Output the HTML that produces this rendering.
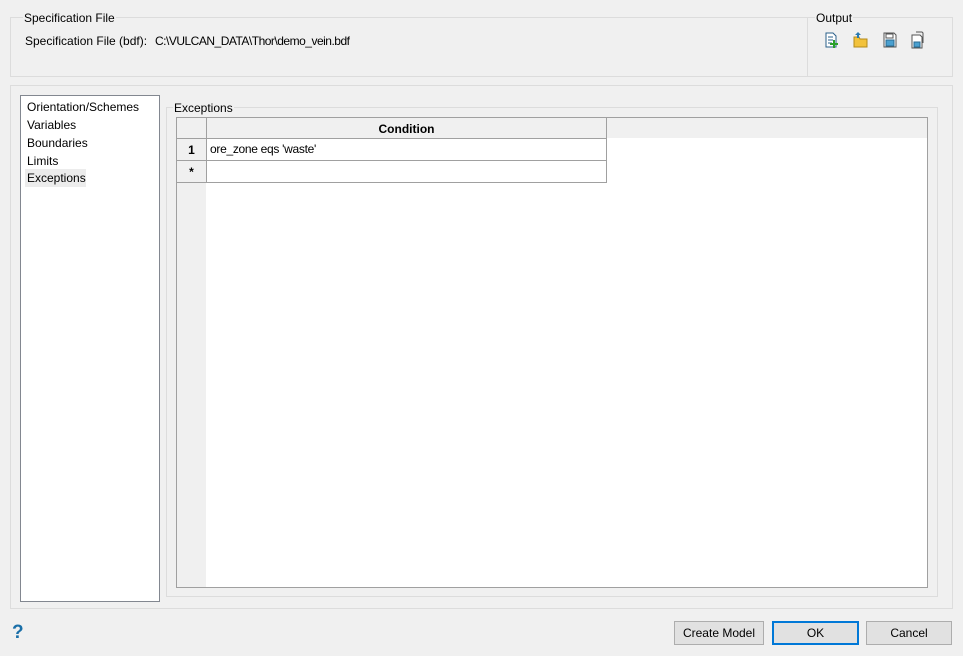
<!DOCTYPE html>
<html><head><style>
body{margin:0;width:963px;height:656px;background:#f0f0f0;font-family:"Liberation Sans",sans-serif;font-size:12px;color:#000;position:relative;overflow:hidden}
.a{position:absolute}
.box{position:absolute;border:1px solid #dcdcdc}
.lbl{position:absolute;background:#f0f0f0;padding:0 1px;line-height:14px;white-space:nowrap}
.btn{position:absolute;height:22px;border:1px solid #adadad;background:#e1e1e1;text-align:center;line-height:22px}
</style></head><body>
<div class="box" style="left:10px;top:17px;width:941px;height:58px"></div>
<div class="a" style="left:807px;top:18px;width:1px;height:58px;background:#dcdcdc"></div>
<div class="lbl" style="left:23px;top:11px">Specification File</div>
<div class="lbl" style="left:815px;top:11px">Output</div>
<div class="a" style="left:25px;top:34px;line-height:14px;white-space:nowrap">Specification File (bdf):</div>
<div class="a" style="left:155px;top:34px;line-height:14px;white-space:nowrap;letter-spacing:-0.5px">C:\VULCAN_DATA\Thor\demo_vein.bdf</div>
<svg class="a" style="left:824px;top:31px" width="105" height="18" viewBox="0 0 105 18">
<path d="M2 2h7l3 3v11H2z" fill="#fff" stroke="#2a5f8a"/><path d="M4 6h5M4 9h5M4 12h4" stroke="#2a5f8a"/>
<path d="M9 9h2v3h3v2h-3v3H9v-3H6v-2h3z" fill="#2aa02a"/>
<path d="M30 6h5l1 2h7v8H30z" fill="#f2c23c" stroke="#b38a1a"/><path d="M34 1l3 3h-2v3h-2V4h-2z" fill="#2a7ab0"/>
<path d="M60 2h10l2 2v12H60z" fill="#fff" stroke="#555"/><rect x="62" y="3" width="7" height="4" fill="#fff" stroke="#555"/><rect x="62" y="9" width="8" height="6" fill="#4aa0d0" stroke="#2a6a90"/>
<path d="M92 1h6l1 1v10" fill="none" stroke="#555"/><path d="M88 4h8l2 2v11H88z" fill="#fff" stroke="#555"/><rect x="90" y="11" width="6" height="5" fill="#4aa0d0" stroke="#2a6a90"/>
</svg>
<div class="box" style="left:10px;top:85px;width:941px;height:522px"></div>
<div class="a" style="left:20px;top:95px;width:138px;height:505px;background:#fff;border:1px solid #828790"></div>
<div class="a" style="left:27px;top:98px;line-height:18px">Orientation/Schemes<br>Variables<br>Boundaries<br>Limits</div>
<div class="a" style="left:25px;top:169px;width:61px;height:18px;background:#ececec"></div>
<div class="a" style="left:27px;top:170px;line-height:16px">Exceptions</div>
<div class="box" style="left:166px;top:107px;width:770px;height:488px"></div>
<div class="lbl" style="left:173px;top:101px">Exceptions</div>
<div class="a" style="left:176px;top:117px;width:750px;height:469px;border:1px solid #a0a0a0;background:#fff"></div>
<div class="a" style="left:177px;top:118px;width:750px;height:20px;background:#f0f0f0"></div>
<div class="a" style="left:177px;top:118px;width:29px;height:469px;background:#f0f0f0"></div>
<div class="a" style="left:177px;top:118px;width:429px;height:64px;border-right:1px solid #a0a0a0;border-bottom:1px solid #a0a0a0"></div>
<div class="a" style="left:206px;top:118px;width:1px;height:64px;background:#a0a0a0"></div>
<div class="a" style="left:177px;top:138px;width:429px;height:1px;background:#a0a0a0"></div>
<div class="a" style="left:177px;top:160px;width:429px;height:1px;background:#a0a0a0"></div>
<div class="a" style="left:207px;top:122px;width:399px;text-align:center;font-weight:bold;line-height:14px">Condition</div>
<div class="a" style="left:177px;top:143px;width:29px;text-align:center;font-weight:bold;line-height:14px">1</div>
<div class="a" style="left:177px;top:165px;width:29px;text-align:center;font-weight:bold;line-height:14px">*</div>
<div class="a" style="left:210px;top:142px;line-height:14px;letter-spacing:-0.3px">ore_zone eqs 'waste'</div>
<div class="a" style="left:12px;top:622px;font-size:19px;font-weight:bold;color:#1a6fa8">?</div>
<div class="btn" style="left:674px;top:621px;width:88px">Create Model</div>
<div class="btn" style="left:772px;top:621px;width:83px;border:2px solid #0078d7;height:20px;line-height:20px">OK</div>
<div class="btn" style="left:866px;top:621px;width:84px">Cancel</div>
</body></html>
